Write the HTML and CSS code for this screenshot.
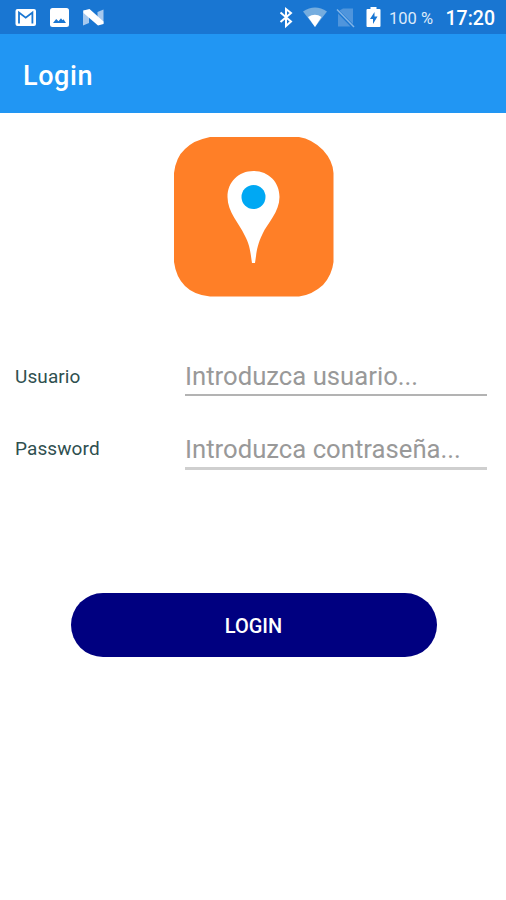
FILE: index.html
```html
<!DOCTYPE html>
<html lang="es">
<head>
<meta charset="utf-8">
<title>Login</title>
<link rel="stylesheet" href="styles.css">
</head>
<body>
<header>
  <div class="status">
    <svg class="status-icons" width="108" height="34" viewBox="0 0 108 34">
      <rect x="15.5" y="9" width="20.5" height="17" rx="2" fill="#fff"/>
      <path d="M19 23.500V12.500l6.700 5.200 6.700-5.200V23.500" fill="none" stroke="#1976d2" stroke-width="1.800"/>
      <rect x="50" y="8" width="19" height="19" rx="2.5" fill="#fff"/>
      <path d="M53 23l3.200-4 2.300 2.300 2.500-3 1.500 2 1-1 2.500 3.700z" fill="#1976d2"/>
      <path d="M83 10.500h6v12.500l-6 2.500zM97.500 12l6-2.500v14l-6 1z" fill="#a5c8ee"/>
      <path d="M83.500 10.500L89.500 9L103.500 21.500V24L98 25.500L83.500 13z" fill="#fff"/>
    </svg>
    <svg class="status-icons" width="110" height="34" viewBox="275 0 110 34">
      <path d="M280.500 12.500l10.500 9-5 4.500V9l5 4-10.500 9" fill="none" stroke="#fff" stroke-width="2"/>
      <path d="M303 11.500Q315 3.500 327 11.500L315 27z" fill="#75addf"/>
      <path d="M308 17Q315 12.500 321.500 17L315 27z" fill="#fff"/>
      <path d="M343 8.500h10v15.500L339.500 10.500zM338 13.500l12.500 13H338z" fill="#4f95dc"/>
      <path d="M337 9.500l17 17.500" stroke="#83b5e7" stroke-width="1.500"/>
      <path d="M367.500 9h3V7h6v2h3q1 0 1 1v16q0 1-1 1h-12q-1 0-1-1V10q0-1 1-1z" fill="#fff"/>
      <path d="M374.500 12l-4.500 7h3v5l4.500-7.500h-3z" fill="#1976d2"/>
    </svg>
    <span class="battery">100 %</span>
    <time class="clock">17:20</time>
  </div>
  <h1 class="title">Login</h1>
</header>
<main>
  <svg class="logo" width="160" height="160" viewBox="0 0 160 160">
    <path d="M36 0H125Q138 2 149 13 159 24 159.500 36V125Q158 138 149 148 138 158 125 159.500H36Q20 158 11 149 2 140 0 125V36Q2 20 11 12 20 3 36 0Z" fill="#ff7f27"/>
    <path d="M79.500 34C64.500 34 53.500 45 53.500 60C53.500 75 65.500 87 70.500 98C76.500 109 76.500 117 78 126H81C82.500 117 82.500 109 88.500 97C93.500 86 105.500 75 105.500 60C105.500 45 94.500 34 79.500 34Z" fill="#fff"/>
    <circle cx="79.500" cy="60" r="12" fill="#00a8f3"/>
  </svg>
  <form>
    <div class="field">
      <label for="user">Usuario</label>
      <input id="user" type="text" placeholder="Introduzca usuario...">
    </div>
    <div class="field password">
      <label for="pass">Password</label>
      <input id="pass" type="password" placeholder="Introduzca contraseña...">
    </div>
    <button type="button">LOGIN</button>
  </form>
</main>
</body>
</html>
```
FILE: styles.css
```css
* { box-sizing: border-box; }
body {
  margin: 0;
  min-height: 900px;
  background: #fff;
  font-family: Roboto, "Liberation Sans", sans-serif;
}
header { height: 113px; background: #2196f3; }
.status {
  display: flex;
  align-items: center;
  height: 34px;
  padding-right: 11px;
  background: #1976d2;
  color: #fff;
}
.status-icons + .status-icons { margin-left: 167px; }
.battery {
  margin-left: 4px;
  padding-top: 2px;
  font-size: 16.5px;
  color: #dceafa;
  white-space: nowrap;
}
.clock {
  margin-left: auto;
  padding-top: 2px;
  font-size: 19.5px;
  font-weight: 500;
}
.title {
  margin: 0;
  padding-left: 23px;
  font-size: 27px;
  font-weight: 500;
  line-height: 84px;
  letter-spacing: 0.6px;
  color: #fff;
}
.logo { display: block; margin: 24px auto 0 174px; }
form { display: flex; flex-direction: column; padding: 59px 19px 0 15px; }
.field {
  display: grid;
  grid-template-columns: 170px 1fr;
  align-items: center;
  height: 41px;
}
.password { margin-top: 32px; }
label {
  font-size: 19px;
  font-weight: 400;
  letter-spacing: 0.1px;
  color: #2f4f4f;
}
.password label { padding-bottom: 2px; }
input {
  width: 100%;
  height: 40px;
  padding: 2px 0 0;
  border: 0;
  border-bottom: 2px solid #b3b3b3;
  background: transparent;
  font: 400 25.7px Roboto, sans-serif;
  outline: none;
}
.field:first-child input { align-self: start; }
.password input { height: 41px; border-bottom: 3px solid #cfcfcf; }
input::placeholder { color: #999; opacity: 1; }
button {
  width: 366px;
  height: 64px;
  margin: 123px 0 0 55.5px;
  padding: 2px 0 0;
  border: 0;
  border-radius: 32px;
  background: #000080;
  color: #fff;
  font: 500 20px Roboto, sans-serif;
}
```
